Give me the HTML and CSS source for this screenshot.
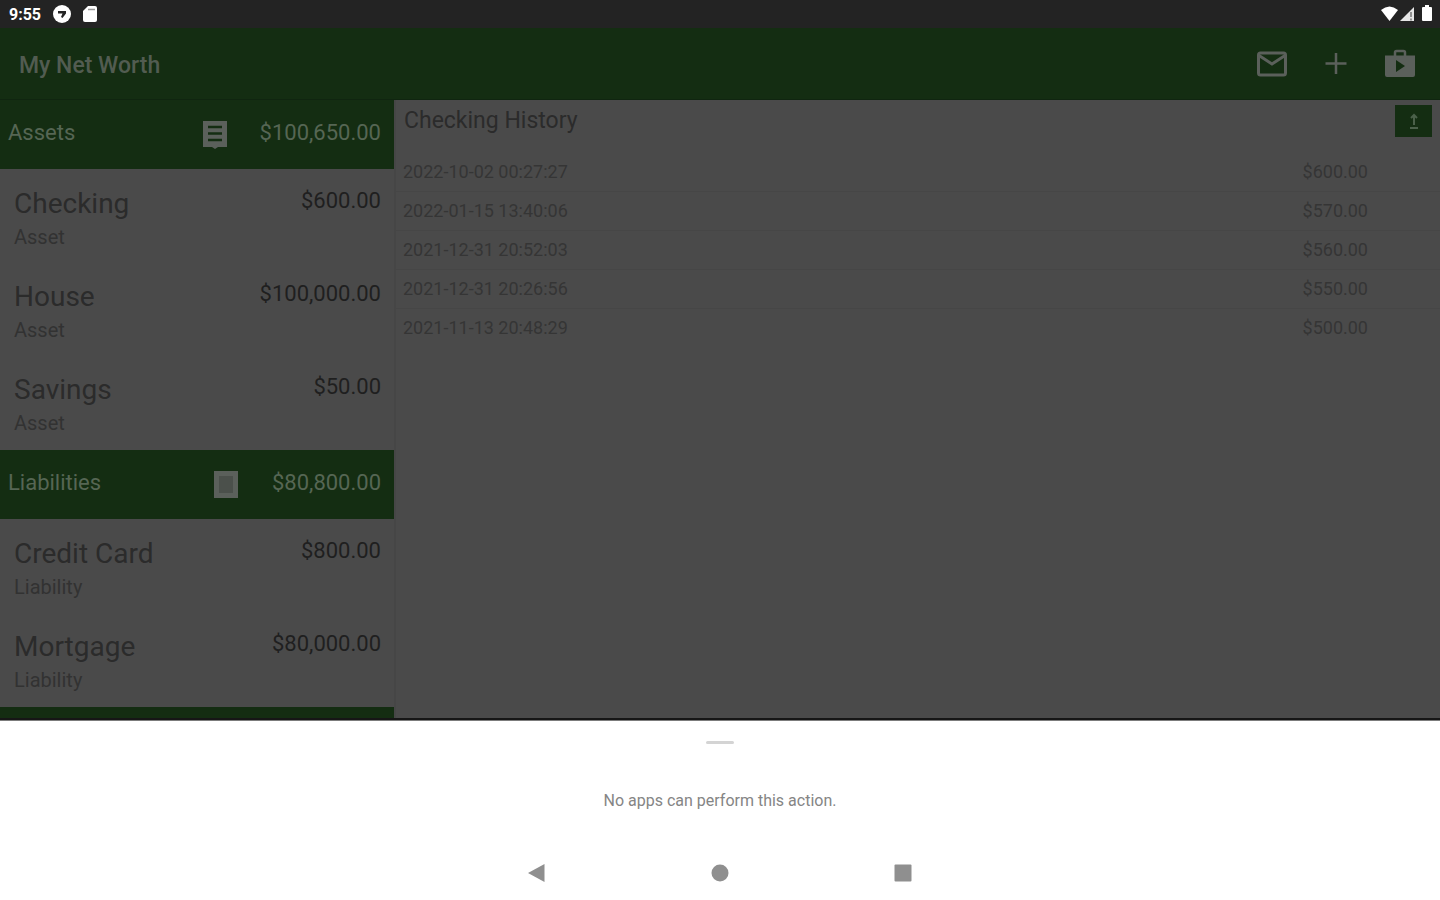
FILE: index.html
```html
<!DOCTYPE html>
<html lang="en">
<head>
<meta charset="utf-8">
<title>My Net Worth</title>
<link rel="stylesheet" href="styles.css">
</head>
<body>
<div class="status">
  <span class="clock">9:55</span>
  <svg width="20" height="20" viewBox="0 0 20 20"><circle cx="10" cy="10" r="9" fill="#fff"/><path d="M6 7h8v2.500l-3.500 4.500-1.500-1 1.500-3.500H6z" fill="#232323"/></svg>
  <svg width="16" height="20" viewBox="0 0 16 20"><path d="M6 2h7q2 0 2 2v12q0 2-2 2H3q-2 0-2-2V7z" fill="#fff"/><path d="M6 5.500h7" stroke="#999" stroke-width="1.500"/></svg>
  <svg class="signals" width="54" height="20" viewBox="0 0 54 20"><path d="M1 6Q9.500-1 18 6L9.500 17z" fill="#fff"/><path d="M34 3v14H20z" fill="#e6e6e6"/><path d="M31 8v5M31 14.500v2" stroke="#777" stroke-width="1.500"/><path d="M43 3h2V1h4v2h2q1 0 1 1v12q0 1-1 1h-8q-1 0-1-1V4q0-1 1-1z" fill="#fff"/></svg>
</div>
<header class="appbar">
  <h1 class="title">My Net Worth</h1>
  <button class="icon-btn" aria-label="Mail"><svg width="32" height="28" viewBox="0 0 32 28"><rect x="2.500" y="3" width="27" height="22" rx="2" fill="none" stroke="#5b605b" stroke-width="3"/><path d="M3 5.500l13 8.500 13-8.500" fill="none" stroke="#5b605b" stroke-width="3"/></svg></button>
  <button class="icon-btn" aria-label="Add"><svg width="32" height="28" viewBox="0 0 32 28"><path d="M16 3v21M5.500 13.500h21" stroke="#5b605b" stroke-width="2.500"/></svg></button>
  <button class="icon-btn" aria-label="Store"><svg width="32" height="30" viewBox="0 0 32 30"><path d="M11 7V3.500q0-1.500 1.500-1.500h7q1.500 0 1.500 1.500V7" fill="none" stroke="#5b605b" stroke-width="2.500"/><path fill-rule="evenodd" fill="#5b605b" d="M1 6.500h30V26q0 2-2 2H3q-2 0-2-2zM12 11v12l9-6z"/></svg></button>
</header>
<main class="main">
  <aside class="accounts">
    <h2 class="group"><span class="group-name">Assets</span><svg width="26" height="34" viewBox="0 0 26 34"><path d="M1 5h24v26h-9l-3 2-3-2H1z" fill="#5b605b"/><path d="M6 11h14M6 17.500h14M6 24h14" stroke="#142d12" stroke-width="2.500"/></svg><span>$100,650.00</span></h2>
    <ul class="list">
      <li class="item"><div><div class="name">Checking</div><div class="kind">Asset</div></div><div class="amount">$600.00</div></li>
      <li class="item"><div><div class="name">House</div><div class="kind">Asset</div></div><div class="amount">$100,000.00</div></li>
      <li class="item"><div><div class="name">Savings</div><div class="kind">Asset</div></div><div class="amount">$50.00</div></li>
    </ul>
    <h2 class="group"><span class="group-name">Liabilities</span><svg width="26" height="34" viewBox="0 0 26 34"><path d="M0 5h24v27H0z" fill="#5b605b"/><path d="M5 10h14v17H5z" fill="#4b504b"/></svg><span>$80,800.00</span></h2>
    <ul class="list">
      <li class="item"><div><div class="name">Credit Card</div><div class="kind">Liability</div></div><div class="amount">$800.00</div></li>
      <li class="item"><div><div class="name">Mortgage</div><div class="kind">Liability</div></div><div class="amount">$80,000.00</div></li>
    </ul>
    <div class="group"></div>
  </aside>
  <section class="history">
    <div class="history-head">
      <h2 class="history-title">Checking History</h2>
      <button class="export" aria-label="Export"><svg width="14" height="20" viewBox="0 0 14 20"><path d="M7 14V4M4 7l3-3 3 3M3 17h8" fill="none" stroke="#4b604a" stroke-width="2"/></svg></button>
    </div>
    <table class="log">
      <tr><td>2022-10-02 00:27:27</td><td class="value">$600.00</td></tr>
      <tr><td>2022-01-15 13:40:06</td><td class="value">$570.00</td></tr>
      <tr><td>2021-12-31 20:52:03</td><td class="value">$560.00</td></tr>
      <tr><td>2021-12-31 20:26:56</td><td class="value">$550.00</td></tr>
      <tr><td>2021-11-13 20:48:29</td><td class="value">$500.00</td></tr>
    </table>
  </section>
</main>
<section class="sheet">
  <div class="handle"></div>
  <p class="message">No apps can perform this action.</p>
  <nav class="nav">
    <button class="nav-btn" aria-label="Back"><svg width="20" height="20" viewBox="0 0 20 20"><path d="M1 10L17.500 1v18z" fill="#8f8f8f"/></svg></button>
    <button class="nav-btn" aria-label="Home"><svg width="20" height="20" viewBox="0 0 20 20"><circle cx="10" cy="10" r="8.500" fill="#8f8f8f"/></svg></button>
    <button class="nav-btn" aria-label="Recent apps"><svg width="20" height="20" viewBox="0 0 20 20"><rect x="1.500" y="1.500" width="17" height="17" rx="1" fill="#8f8f8f"/></svg></button>
  </nav>
</section>
</body>
</html>
```
FILE: styles.css
```css
* { box-sizing: border-box; }

body {
  margin: 0;
  height: 100vh;
  display: flex;
  flex-direction: column;
  overflow: hidden;
  background: #4a4a4a;
  color: #2b2b2b;
  font-family: Roboto, "Liberation Sans", sans-serif;
}

h1, h2, ul, p { margin: 0; padding: 0; font-weight: 400; }
ul { list-style: none; }
svg { display: block; }
button { border: 0; padding: 0; background: none; }

.status {
  display: flex;
  flex: none;
  align-items: center;
  gap: 10px;
  height: 28px;
  padding: 0 6px 0 9px;
  background: #232323;
  color: #fff;
  font-size: 16px;
  font-weight: 700;
}
.clock { margin-right: 1px; }
.signals { margin-left: auto; }

.appbar {
  display: flex;
  flex: none;
  align-items: center;
  gap: 32px;
  height: 72px;
  padding: 0 24px 0 19px;
  background: #142d12;
  border-bottom: 1px solid #102510;
}
.title {
  flex: 1;
  padding-top: 4px;
  color: #525c51;
  font-size: 23px;
  font-weight: 500;
}

.main {
  display: flex;
  flex: 1;
  min-height: 0;
  border-bottom: 2px solid #161616;
}
.accounts {
  flex: 0 0 396px;
  overflow: hidden;
  border-right: 2px solid #464646;
}
.group {
  display: flex;
  align-items: center;
  gap: 32px;
  height: 69px;
  padding: 0 13px 4px 8px;
  background: #142d12;
  color: #566654;
  font-size: 22px;
}
.group-name { flex: 1; }
.list { padding-bottom: 2px; }
.item {
  display: flex;
  justify-content: space-between;
  height: 93px;
  padding: 17px 13px 0 14px;
}
.name { font-size: 28px; line-height: 36px; }
.kind { font-size: 20px; line-height: 30px; color: #323232; }
.amount { font-size: 22px; line-height: 30px; color: #1f1f1f; }

.history { flex: 1; }
.history-head {
  display: flex;
  justify-content: space-between;
  height: 52px;
  padding: 5px 8px 0;
}
.history-title { font-size: 23px; line-height: 32px; }
.export {
  display: grid;
  place-items: center;
  width: 37px;
  height: 32px;
  background: #142d12;
}
.log {
  width: 100%;
  border-collapse: collapse;
  color: #353535;
  font-size: 18px;
}
.log td { height: 39px; padding: 0 7px; }
.log tr + tr td { border-top: 1px solid #464646; }
.log .value { padding-right: 72px; text-align: right; }

.sheet {
  display: flex;
  flex: none;
  flex-direction: column;
  align-items: center;
  height: 180px;
  padding-top: 20px;
  background: #fff;
  border-top: 1px solid #7c7c7c;
}
.handle { width: 28px; height: 3px; border-radius: 2px; background: #d4d4d4; }
.message {
  margin-top: 45px;
  color: #858585;
  font-size: 16px;
  line-height: 24px;
}
.nav { display: flex; gap: 163px; margin-top: 50px; }
.nav-btn { width: 20px; height: 20px; }
```
